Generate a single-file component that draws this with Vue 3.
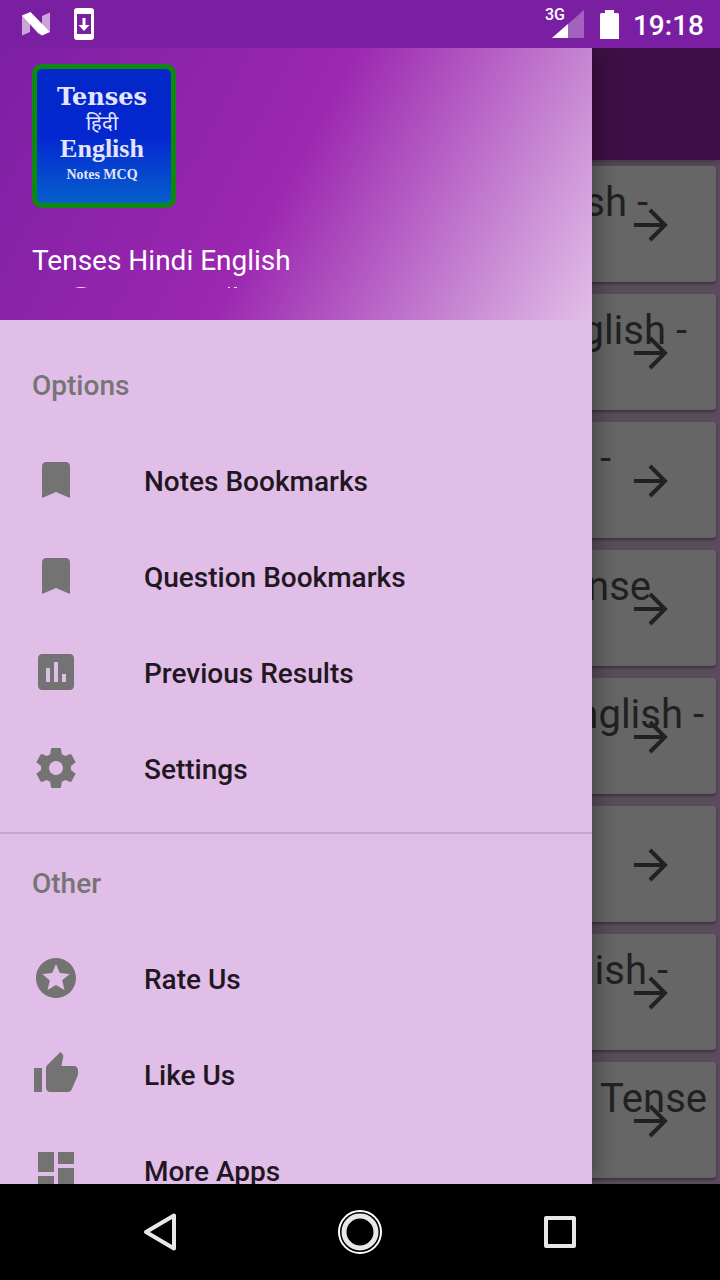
<script setup>
const topics = [
  { text: 'English -', gap: 68 },
  { text: 'English -', gap: 29 },
  { text: '-', gap: 105 },
  { text: 'Tense', gap: 65 },
  { text: 'English -', gap: 12 },
  { text: '', gap: 0 },
  { text: 'English -', gap: 48 },
  { text: 'Tense', gap: 9 },
]

const bookmark = 'M17 3H7c-1.100 0-1.990.9-1.990 2L5 21l7-3 7 3V5c0-1.100-.9-2-2-2z'

const groups = [
  {
    title: 'Options',
    items: [
      { label: 'Notes Bookmarks', icon: bookmark },
      { label: 'Question Bookmarks', icon: bookmark },
      {
        label: 'Previous Results',
        icon: 'M19 3H5c-1.100 0-2 .9-2 2v14c0 1.100.9 2 2 2h14c1.100 0 2-.9 2-2V5c0-1.100-.9-2-2-2zM9 17H7v-7h2v7zm4 0h-2V7h2v10zm4 0h-2v-4h2v4z',
      },
      {
        label: 'Settings',
        icon: 'M19.430 12.980c.04-.32.07-.64.07-.98s-.03-.66-.07-.98l2.110-1.650c.19-.15.24-.42.12-.64l-2-3.460c-.12-.22-.39-.3-.61-.22l-2.490 1c-.52-.4-1.080-.73-1.690-.98l-.38-2.650C14.460 2.180 14.250 2 14 2h-4c-.25 0-.46.18-.49.42l-.38 2.650c-.61.25-1.170.59-1.690.98l-2.490-1c-.23-.09-.49 0-.61.22l-2 3.460c-.13.22-.07.49.12.64l2.110 1.650c-.04.32-.07.65-.07.98s.03.66.07.98l-2.110 1.650c-.19.15-.24.42-.12.64l2 3.460c.12.22.39.3.61.22l2.490-1c.52.4 1.080.73 1.690.98l.38 2.650c.03.24.24.42.49.42h4c.25 0 .46-.18.49-.42l.38-2.650c.61-.25 1.170-.59 1.690-.98l2.490 1c.23.09.49 0 .61-.22l2-3.460c.12-.22.07-.49-.12-.64l-2.110-1.650zM12 15.500c-1.930 0-3.500-1.570-3.500-3.500s1.570-3.500 3.500-3.500 3.500 1.570 3.500 3.500-1.570 3.500-3.500 3.500z',
      },
    ],
  },
  {
    title: 'Other',
    items: [
      {
        label: 'Rate Us',
        icon: 'M11.990 2C6.470 2 2 6.480 2 12s4.470 10 9.990 10C17.520 22 22 17.520 22 12S17.520 2 11.990 2zm4.240 16L12 15.450 7.770 18l1.120-4.810-3.730-3.230 4.920-.42L12 5l1.920 4.530 4.920.42-3.730 3.230L16.230 18z',
      },
      {
        label: 'Like Us',
        icon: 'M1 21h4V9H1v12zm22-11c0-1.100-.9-2-2-2h-6.310l.95-4.570.03-.32c0-.41-.17-.79-.44-1.060L14.170 1 7.590 7.590C7.220 7.950 7 8.450 7 9v10c0 1.100.9 2 2 2h9c.83 0 1.540-.5 1.840-1.220l3.020-7.050c.09-.23.14-.47.14-.73v-1.910l-.01-.01L23 10z',
      },
      { label: 'More Apps', icon: 'M3 13h8V3H3v10zm0 8h8v-6H3v6zm10 0h8V11h-8v10zm0-18v6h8V3h-8z' },
    ],
  },
]
</script>

<template>
  <div class="screen">
    <header class="status">
      <svg class="status-n" viewBox="0 0 28 24" width="28" height="24">
        <path d="M0 3L8 11V20L0 23.500z" fill="#fff" fill-opacity=".6" />
        <path d="M20 4L28 0.500V20L20 13z" fill="#fff" fill-opacity=".6" />
        <path d="M0 3.500L8.500 0L28 20L20 23.500L16 21z" fill="#fff" />
      </svg>
      <svg class="status-dl" viewBox="0 0 20 32" width="20" height="32">
        <path fill="#fff" fill-rule="evenodd" d="M3 0H17Q20 0 20 3V29Q20 32 17 32H3Q0 32 0 29V3Q0 0 3 0zM3 6V26H17V6z" />
        <path fill="#fff" d="M8.500 10h3v7h4L10 23l-5.500-6h4z" />
      </svg>
      <div class="network">
        <span class="network-type">3G</span>
        <svg viewBox="0 0 32 28" width="32" height="28">
          <path d="M32 0V28H0z" fill="#fff" fill-opacity=".3" />
          <path d="M16 14V28H0z" fill="#fff" />
        </svg>
      </div>
      <svg class="battery" viewBox="0 0 19 29" width="19" height="29">
        <path fill="#fff" d="M5 0H14V3H17.500Q19 3 19 4.500V29H0V4.500Q0 3 1.500 3H5z" />
      </svg>
      <time class="clock">19:18</time>
    </header>

    <main class="stage">
      <div class="page">
        <div class="toolbar"></div>
        <ul class="topics">
          <li v-for="(topic, i) in topics" :key="i" class="card">
            <span class="topic" :style="{ marginRight: topic.gap + 'px' }">{{ topic.text }}</span>
            <svg class="arrow" viewBox="0 0 34 34" width="34" height="34">
              <path d="M0 17H31M16 2L31 17L16 32" fill="none" stroke="currentColor" stroke-width="4" />
            </svg>
          </li>
        </ul>
      </div>
      <div class="scrim"></div>

      <aside class="drawer">
        <div class="account">
          <div class="logo">
            <span class="logo-top">Tenses</span>
            <span class="logo-hindi">हिंदी</span>
            <span class="logo-mid">English</span>
            <span class="logo-sub">Notes MCQ</span>
          </div>
          <div class="account-name">Tenses Hindi English</div>
          <svg class="clipped-line" viewBox="0 0 258 2" width="258" height="2">
            <path d="M43 2Q49 0 55 2zM202 1h3v1h-3zM196 1h2v1h-2z" fill="#fff" fill-opacity=".85" />
          </svg>
        </div>
        <nav>
          <section v-for="group in groups" :key="group.title" class="group">
            <h2 class="group-title">{{ group.title }}</h2>
            <button v-for="item in group.items" :key="item.label" type="button" class="item">
              <svg viewBox="0 0 24 24" width="48" height="48"><path :d="item.icon" fill="#737373" /></svg>
              <span>{{ item.label }}</span>
            </button>
          </section>
        </nav>
      </aside>
    </main>

    <footer class="navbar">
      <button type="button" aria-label="Back">
        <svg viewBox="0 0 48 48" width="48" height="48">
          <path d="M10 24L38 7.500V40.500z" fill="none" stroke="#e8e8e8" stroke-width="4" stroke-linejoin="round" />
        </svg>
      </button>
      <button type="button" aria-label="Home">
        <svg viewBox="0 0 48 48" width="48" height="48" fill="none">
          <circle cx="24" cy="24" r="21" stroke="#fff" stroke-width="2" />
          <circle cx="24" cy="24" r="16" stroke="#e8e8e8" stroke-width="5" />
        </svg>
      </button>
      <button type="button" aria-label="Recent apps">
        <svg viewBox="0 0 48 48" width="48" height="48">
          <rect x="10" y="10" width="28" height="28" fill="none" stroke="#e8e8e8" stroke-width="4" stroke-linejoin="round" />
        </svg>
      </button>
    </footer>
  </div>
</template>

<style>
body {
  background: #000;
}
</style>

<style scoped>
.screen {
  display: flex;
  flex-direction: column;
  height: 100vh;
  overflow: hidden;
  font-family: Roboto, "Noto Sans", sans-serif;
}
svg {
  display: block;
  flex: none;
}
button {
  border: 0;
  padding: 0;
  background: none;
  font: inherit;
  color: inherit;
}
.status {
  flex: none;
  display: flex;
  align-items: center;
  height: 48px;
  padding: 0 16px 0 22px;
  box-sizing: border-box;
  background: #7b1fa2;
  color: #fff;
}
.status-dl {
  margin-left: 24px;
}
.network {
  position: relative;
  margin-left: auto;
}
.network-type {
  position: absolute;
  left: -7px;
  top: -4px;
  font-size: 16px;
  line-height: 18px;
  font-weight: 500;
}
.battery {
  margin-left: 16px;
}
.clock {
  margin-left: 14px;
  font-size: 28px;
  line-height: 32px;
  font-weight: 500;
  padding-top: 4px;
}
.stage {
  position: relative;
  flex: 1;
  min-height: 0;
  overflow: hidden;
}
.page {
  height: 100%;
  background: #e1bee7;
}
.toolbar {
  position: relative;
  height: 112px;
  background: #9c27b0;
  box-shadow: 0 2px 6px rgba(0, 0, 0, 0.3);
}
.topics {
  display: flex;
  flex-direction: column;
  gap: 12px;
  margin: 0;
  padding: 6px 4px;
  list-style: none;
}
.card {
  position: relative;
  display: flex;
  justify-content: flex-end;
  height: 116px;
  padding-top: 12px;
  box-sizing: border-box;
  border-radius: 4px;
  background: #fff;
  box-shadow: 0 2px 3px rgba(0, 0, 0, 0.35);
  color: #545454;
}
.topic {
  font-size: 40px;
  line-height: 50px;
  white-space: nowrap;
}
.arrow {
  position: absolute;
  right: 48px;
  top: 42px;
}
.scrim {
  position: absolute;
  inset: 0;
  background: rgba(0, 0, 0, 0.6);
}
.drawer {
  position: absolute;
  top: 0;
  bottom: 0;
  left: 0;
  width: calc(100% - 128px);
  overflow: hidden;
  background: #e1bee7;
  box-shadow: 0 0 24px rgba(0, 0, 0, 0.45);
}
.account {
  height: 272px;
  padding: 16px 32px 32px;
  box-sizing: border-box;
  background: linear-gradient(118deg, #7b1fa2, #9c27b0 50%, #e1bee7) bottom / 100% calc(100% + 48px) no-repeat;
  color: #fff;
}
.logo {
  display: flex;
  flex-direction: column;
  align-items: center;
  width: 144px;
  height: 144px;
  padding: 14px 4px 0 0;
  box-sizing: border-box;
  border: 5px solid #0c8a10;
  border-radius: 10px;
  background: linear-gradient(#0427c8, #0427d0 50%, #0660cc);
  color: #e4e4ff;
  font-family: "Liberation Serif", serif;
  font-weight: 700;
  white-space: nowrap;
}
.logo-top {
  font-family: "DejaVu Serif", serif;
  font-size: 24px;
  line-height: 28px;
}
.logo-hindi {
  font-size: 20px;
  line-height: 24px;
  font-weight: 400;
}
.logo-mid {
  font-size: 26px;
  line-height: 28px;
}
.logo-sub {
  font-size: 14px;
  line-height: 24px;
}
.account-name {
  margin-top: 36px;
  font-size: 28px;
  line-height: 34px;
}
.clipped-line {
  margin-top: 8px;
}
.group {
  padding: 16px 0;
}
.group + .group {
  padding-top: 0;
  border-top: 2px solid #c6a7cb;
}
.group-title {
  margin: 0;
  padding: 4px 32px 0;
  font-size: 28px;
  line-height: 92px;
  font-weight: 500;
  color: #757575;
}
.item {
  display: flex;
  align-items: center;
  gap: 64px;
  width: 100%;
  height: 96px;
  padding: 0 32px;
  font-size: 28px;
  line-height: 32px;
  font-weight: 500;
  color: #211723;
  text-align: left;
}
.item span {
  padding-top: 4px;
}
.navbar {
  flex: none;
  display: flex;
  justify-content: center;
  height: 96px;
  background: #000;
}
.navbar button {
  display: flex;
  align-items: center;
  justify-content: center;
  width: 200px;
}
</style>
